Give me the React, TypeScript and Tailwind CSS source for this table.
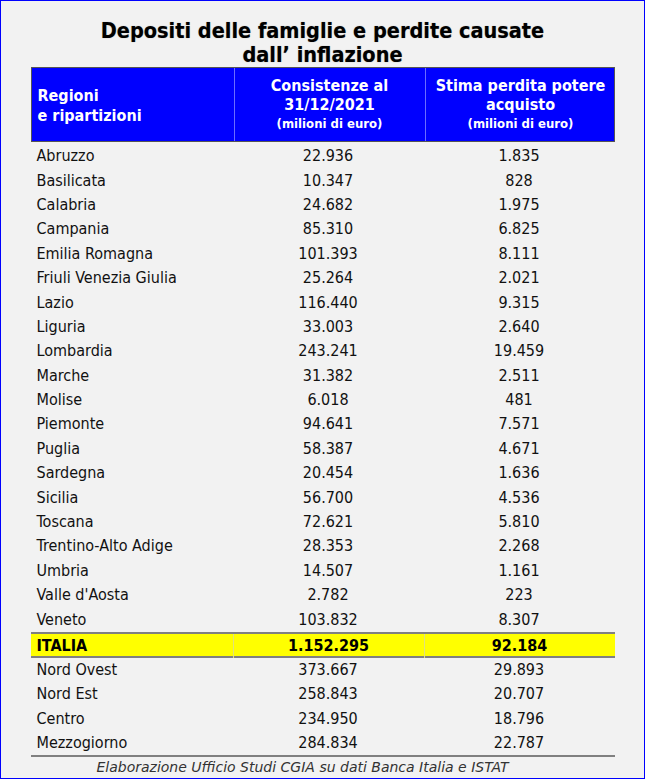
import React from "react";

const regions: [string, string, string][] = [
  ["Abruzzo", "22.936", "1.835"],
  ["Basilicata", "10.347", "828"],
  ["Calabria", "24.682", "1.975"],
  ["Campania", "85.310", "6.825"],
  ["Emilia Romagna", "101.393", "8.111"],
  ["Friuli Venezia Giulia", "25.264", "2.021"],
  ["Lazio", "116.440", "9.315"],
  ["Liguria", "33.003", "2.640"],
  ["Lombardia", "243.241", "19.459"],
  ["Marche", "31.382", "2.511"],
  ["Molise", "6.018", "481"],
  ["Piemonte", "94.641", "7.571"],
  ["Puglia", "58.387", "4.671"],
  ["Sardegna", "20.454", "1.636"],
  ["Sicilia", "56.700", "4.536"],
  ["Toscana", "72.621", "5.810"],
  ["Trentino-Alto Adige", "28.353", "2.268"],
  ["Umbria", "14.507", "1.161"],
  ["Valle d'Aosta", "2.782", "223"],
  ["Veneto", "103.832", "8.307"],
];

const areas: [string, string, string][] = [
  ["Nord Ovest", "373.667", "29.893"],
  ["Nord Est", "258.843", "20.707"],
  ["Centro", "234.950", "18.796"],
  ["Mezzogiorno", "284.834", "22.787"],
];

function Row({ r }: { r: [string, string, string] }) {
  return (
    <div className="grid grid-cols-[202px_191px_191px] h-[24.4px] items-center text-[16px] text-[#111]">
      <div className="pl-[6px]">{r[0]}</div>
      <div className="text-center">{r[1]}</div>
      <div className="text-center">{r[2]}</div>
    </div>
  );
}

export default function App() {
  return (
    <div
      className="w-[645px] h-[779px] bg-[#f2f2f2] border border-[#0000ff] flex flex-col items-center"
      style={{ fontFamily: '"DejaVu Sans Condensed", "DejaVu Sans", sans-serif' }}
    >
      <div className="pt-[18px] h-[66px] text-center font-bold text-[21.5px] leading-[24px] text-black [text-shadow:0_0_1px_rgba(0,0,0,0.4)]">
        <div>Depositi delle famiglie e perdite causate</div>
        <div>dall’ inflazione</div>
      </div>
      <div className="w-[584px]">
        <div className="grid grid-cols-[202px_191px_191px] h-[75px] bg-[#0000ff] border border-[#555] text-white font-bold">
          <div className="flex flex-col justify-center pl-[6px] text-[16px] leading-[20px] pt-[2px]">
            <div>Regioni</div>
            <div>e ripartizioni</div>
          </div>
          <div className="flex flex-col items-center justify-center border-l border-[#6b6bff] text-[16px] leading-[19px]">
            <div>Consistenze al</div>
            <div>31/12/2021</div>
            <div className="text-[13px] leading-[20px]">(milioni di euro)</div>
          </div>
          <div className="flex flex-col items-center justify-center border-l border-[#6b6bff] text-[16px] leading-[19px]">
            <div>Stima perdita potere</div>
            <div>acquisto</div>
            <div className="text-[13px] leading-[20px]">(milioni di euro)</div>
          </div>
        </div>
        <div className="pt-[2px]">
          {regions.map((r) => (
            <Row key={r[0]} r={r} />
          ))}
        </div>
        <div className="grid grid-cols-[202px_191px_191px] h-[26px] items-center bg-[#ffff00] border-y-2 border-[#808080] font-bold text-[16px] text-black">
          <div className="pl-[6px]">ITALIA</div>
          <div className="text-center border-l border-[#e0e080] h-full flex items-center justify-center">1.152.295</div>
          <div className="text-center border-l border-[#e0e080] h-full flex items-center justify-center">92.184</div>
        </div>
        <div className="border-b-2 border-[#808080]">
          {areas.map((r) => (
            <Row key={r[0]} r={r} />
          ))}
        </div>
        <div
          className="text-center italic text-[14px] text-[#333] leading-[20px] pr-[40px]"
          style={{ fontFamily: '"DejaVu Sans", sans-serif' }}
        >
          Elaborazione Ufficio Studi CGIA su dati Banca Italia e ISTAT
        </div>
      </div>
    </div>
  );
}
